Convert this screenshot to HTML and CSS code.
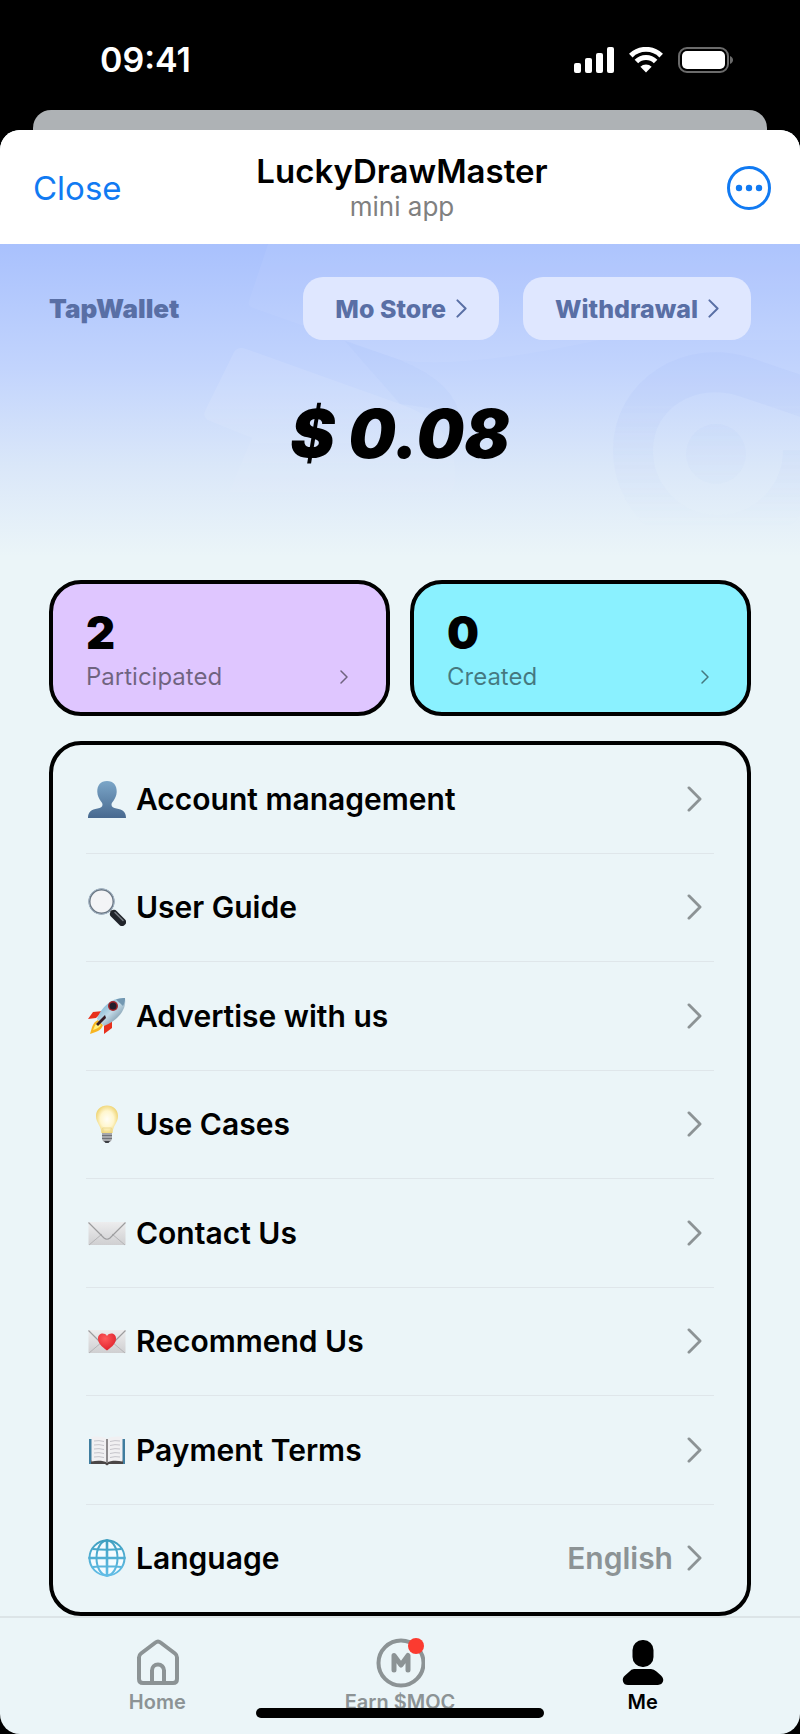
FILE: index.html
```
<!doctype html>
<html lang="en">
<head>
<meta charset="utf-8">
<meta name="viewport" content="width=device-width, initial-scale=1">
<link rel="stylesheet" href="styles.css">
<title>LuckyDrawMaster</title>
</head>
<body>

<svg class="defs" width="0" height="0" aria-hidden="true">
  <defs>
    <linearGradient id="bust" x1="0" y1="0" x2="0" y2="1">
      <stop offset="0" stop-color="#7ba6c8"/><stop offset="1" stop-color="#48698f"/>
    </linearGradient>
    <linearGradient id="paper" x1="0" y1="0" x2="0" y2="1">
      <stop offset="0" stop-color="#ededee"/><stop offset="1" stop-color="#cfcfd1"/>
    </linearGradient>
    <linearGradient id="hull" x1="0" y1="0" x2="1" y2="1">
      <stop offset="0" stop-color="#4f9fc8"/><stop offset=".5" stop-color="#c3dbe8"/><stop offset="1" stop-color="#4b6a80"/>
    </linearGradient>
    <linearGradient id="globe" x1="0" y1="0" x2="0" y2="1">
      <stop offset="0" stop-color="#3f9fc0"/><stop offset="1" stop-color="#62bde6"/>
    </linearGradient>
    <radialGradient id="glow" cx=".5" cy=".5" r=".55">
      <stop offset="0" stop-color="#fffef6"/><stop offset=".55" stop-color="#fff6cd"/><stop offset="1" stop-color="#edd16b"/>
    </radialGradient>
    <radialGradient id="heart" cx=".4" cy=".3" r=".7">
      <stop offset="0" stop-color="#ff5a5a"/><stop offset="1" stop-color="#e0242e"/>
    </radialGradient>
    <symbol id="chevron" viewBox="0 0 16 28">
      <path d="M2 2l12 12L2 26" fill="none" stroke="currentColor" stroke-linecap="round" stroke-linejoin="round"/>
    </symbol>
  </defs>
</svg>

<header class="status">
  <span class="time">09:41</span>
  <div class="signals">
    <svg width="40" height="26" viewBox="0 0 40 26" fill="#fff">
      <rect x="0" y="16" width="7" height="10" rx="2"/>
      <rect x="11" y="11" width="7" height="15" rx="2"/>
      <rect x="22" y="6" width="7" height="20" rx="2"/>
      <rect x="33" y="0" width="7" height="26" rx="2"/>
    </svg>
    <svg width="34" height="26" viewBox="0 0 34 26">
      <g fill="none" stroke="#fff" stroke-width="5">
        <path d="M1.8 8.6a21.6 21.6 0 0 1 30.4 0"/>
        <path d="M7.4 14.4a13.6 13.6 0 0 1 19.2 0"/>
      </g>
      <path d="M17 25.500l-5.600-5.700a8 8 0 0 1 11.200 0z" fill="#fff"/>
    </svg>
    <svg width="56" height="26" viewBox="0 0 56 26">
      <rect x="1" y="1" width="49" height="24" rx="8" fill="none" stroke="#6b6b6b" stroke-width="2"/>
      <rect x="4" y="4" width="43" height="18" rx="5" fill="#fff"/>
      <path d="M52 9c4 1.500 4 6.500 0 8z" fill="#6b6b6b"/>
    </svg>
  </div>
</header>

<div class="peek"></div>

<main class="sheet">
  <div class="titlebar">
    <a class="close" href="#">Close</a>
    <div class="titles">
      <h1>LuckyDrawMaster</h1>
      <p>mini app</p>
    </div>
    <button class="more" type="button" aria-label="More">
      <svg width="44" height="44" viewBox="0 0 44 44" fill="#117af2">
        <circle cx="22" cy="22" r="20.500" fill="none" stroke="#117af2" stroke-width="3"/>
        <circle cx="12" cy="22" r="3.200"/><circle cx="22" cy="22" r="3.200"/><circle cx="32" cy="22" r="3.200"/>
      </svg>
    </button>
  </div>

  <section class="wallet">
    <svg class="pattern" viewBox="0 0 800 316" preserveAspectRatio="xMidYMin slice" aria-hidden="true">
      <path d="M268 0L249 57q-2 5 4 7L400 116q60 10 200-20H800V0z" fill="#fff" opacity=".05"/>
      <path d="M234 108q4-6 12-3L400 160q60 20 55 80L420 316H200l52-122-42-17q-9-4-4-12z" fill="#fff" opacity=".1"/>
      <path d="M345 97L400 116q58 24 60 60q-8-10-60-16z" fill="#7f9df0" opacity=".05"/>
      <g fill="none" stroke="#7f9df0" opacity=".07">
        <path d="M810 155L745 133C690 115 633 150 633 206a85 85 0 0 0 170 0" stroke-width="40"/>
      </g>
      <circle cx="716" cy="210" r="30" fill="#7f9df0" opacity=".05"/>
    </svg>
    <div class="actions">
      <h2>TapWallet</h2>
      <a class="pill" href="#">Mo Store <svg class="chev-s"><use href="#chevron"/></svg></a>
      <a class="pill" href="#">Withdrawal <svg class="chev-s"><use href="#chevron"/></svg></a>
    </div>
    <p class="balance">$ 0.08</p>
  </section>

  <section class="stats">
    <a class="stat joined" href="#">
      <strong>2</strong>
      <span>Participated <svg class="chev-xs"><use href="#chevron"/></svg></span>
    </a>
    <a class="stat created" href="#">
      <strong>0</strong>
      <span>Created <svg class="chev-xs"><use href="#chevron"/></svg></span>
    </a>
  </section>

  <nav class="menu">
    <a href="#">
      <svg class="emoji" viewBox="0 0 38 38"><path d="M19 1c6.500 0 10 4.500 9.700 11-.2 4-1.700 6-2.700 8-1.500 2.300-2.500 3-2.500 4.800 0 2.500 2 3.200 5 3.700 6 1 9.500 3 9.500 9.500H0c0-6.500 3.500-8.500 9.500-9.500 3-.5 5-1.200 5-3.700 0-1.800-1-2.500-2.500-4.800-1-2-2.500-4-2.700-8C9 5.500 12.500 1 19 1z" fill="url(#bust)"/></svg>
      <span>Account management</span>
      <svg class="chev"><use href="#chevron"/></svg>
    </a>
    <a href="#">
      <svg class="emoji" viewBox="0 0 38 38">
        <path d="M22 22l4 4" stroke="#777" stroke-width="3"/>
        <path d="M26 26l8 8" stroke="#20242a" stroke-width="8" stroke-linecap="round"/>
        <path d="M27 24.500l8 8" stroke="#777d84" stroke-width="1.500" stroke-linecap="round"/>
        <circle cx="13.500" cy="13.500" r="12" fill="#f3f4f6" stroke="#6b7783" stroke-width="2"/>
        <circle cx="13.500" cy="13.500" r="12.800" fill="none" stroke="#a3b4c5" stroke-width="1"/>
      </svg>
      <span>User Guide</span>
      <svg class="chev"><use href="#chevron"/></svg>
    </a>
    <a href="#">
      <svg class="emoji" viewBox="0 0 38 38">
        <path d="M15 14L5 15 0 22l8-1zM24 23l0 8-8 6 0-9z" fill="#e8301c"/>
        <path d="M10 23C4 26 4 31 2 37c6-2 11-3 13-9z" fill="#f7b521"/>
        <path d="M10 25c-3 2-4 6-5 8 3-1 6-2 8-5z" fill="#fff07a"/>
        <path d="M9 22C13 10 24 0 37 1c2 12-8 23-21 28z" fill="url(#hull)"/>
        <path d="M37 1c-3-.3-6 .2-9 1.500l7 6.500c1.500-2.700 2.200-5.400 2-8z" fill="#7398b2"/>
        <path d="M8 27l9-9 1 3-8 8z" fill="#351a22"/>
        <circle cx="25" cy="9" r="5" fill="#a3262c"/><circle cx="25" cy="9" r="3.500" fill="#241e2c"/>
      </svg>
      <span>Advertise with us</span>
      <svg class="chev"><use href="#chevron"/></svg>
    </a>
    <a href="#">
      <svg class="emoji" viewBox="0 0 38 38">
        <path d="M14 27h10v6c0 3-2 4.500-5 4.500S14 36 14 33z" fill="#a6a7ab"/>
        <path d="M14 30.500h10M14 33.500h10" stroke="#717379"/>
        <path d="M16 36h6l-1.500 2h-3z" fill="#3b3d42"/>
        <path d="M19 .5c6.500 0 11 4.500 11 10.500 0 7-5 9-5.500 17h-11C13 20 8 18 8 11 8 5 12.500.5 19 .5z" fill="url(#glow)"/>
        <path d="M15.500 27l-1-4h9l-1 4" fill="none" stroke="#ecd98f"/>
      </svg>
      <span>Use Cases</span>
      <svg class="chev"><use href="#chevron"/></svg>
    </a>
    <a href="#">
      <svg class="emoji" viewBox="0 0 38 38">
        <path d="M.5 8h37v23H.5z" fill="url(#paper)"/>
        <path d="M1 31l13-11M37 31L24 20" stroke="#b4b4b6" fill="none"/>
        <path d="M.5 8.500L16 24q3 2.500 6 0L37.500 8.500" stroke="#9c9c9e" stroke-width="1.200" fill="none"/>
      </svg>
      <span>Contact Us</span>
      <svg class="chev"><use href="#chevron"/></svg>
    </a>
    <a href="#">
      <svg class="emoji" viewBox="0 0 38 38">
        <path d="M.5 8h37v23H.5z" fill="url(#paper)"/>
        <path d="M1 31l13-11M37 31L24 20" stroke="#b4b4b6" fill="none"/>
        <path d="M.5 8.500L16 24q3 2.500 6 0L37.500 8.500" stroke="#9c9c9e" stroke-width="1.200" fill="none"/>
        <path d="M19 28.500C13.500 24.500 10 21 10 16.500c0-5.500 6.500-6.500 9-2.500 2.500-4 9-3 9 2.500 0 4.500-3.500 8-9 12z" fill="url(#heart)"/>
      </svg>
      <span>Recommend Us</span>
      <svg class="chev"><use href="#chevron"/></svg>
    </a>
    <a href="#">
      <svg class="emoji" viewBox="0 0 38 38">
        <path d="M1 8h36v25H1z" fill="#3f7d9f"/>
        <path d="M3 29h32v4H21l-2 1.500L17 33H3z" fill="#4a4646"/>
        <path d="M3.500 6C9 5 16 5.500 19 8c3-2.500 10-3 15.500-2v24.500C29 29 22 29.500 19 31.500c-3-2-10-2.500-15.500-1z" fill="#f1f0f2"/>
        <path d="M19 8v23.500" stroke="#8d8a8c" stroke-width="2"/>
        <path d="M6 10q5-1 10 .5M6 14q5-1 10 .5M6 18q5-1 10 .5M6 22q5-1 10 .5M6 26q5-1 10 .5M22 10.500q5-1.500 10-.5M22 14.500q5-1.500 10-.5M22 18.500q5-1.500 10-.5M22 22.500q5-1.500 10-.5M22 26.500q5-1.500 10-.5" stroke="#c5c4ca" fill="none"/>
      </svg>
      <span>Payment Terms</span>
      <svg class="chev"><use href="#chevron"/></svg>
    </a>
    <a href="#">
      <svg class="emoji" viewBox="0 0 38 38">
        <circle cx="19" cy="19" r="17.700" fill="#f4fbff"/>
        <g fill="none" stroke="url(#globe)" stroke-width="2">
          <circle cx="19" cy="19" r="17.500"/>
          <ellipse cx="19" cy="19" rx="10.500" ry="17.500"/>
          <path d="M18.700 1.300h.6v35.400h-.6zM4.500 10q14.500 1.500 29 0M4.500 28q14.500-1.500 29 0M1.300 18.700h35.400v.6H1.300z"/>
        </g>
      </svg>
      <span>Language</span>
      <em>English</em>
      <svg class="chev"><use href="#chevron"/></svg>
    </a>
  </nav>

  <footer class="tabs">
    <a href="#">
      <svg width="48" height="50" viewBox="0 0 48 50" fill="none" stroke="currentColor" stroke-width="4" stroke-linejoin="round">
        <path d="M6 19.500q0-2.500 2-4L22.500 4.500q2.500-2 5 0L42 15.500q2 1.500 2 4V41q0 4-4 4H10q-4 0-4-4z"/>
        <path d="M19 45V32.500a6 6 0 0 1 12 0V45"/>
      </svg>
      Home
    </a>
    <a href="#">
      <svg width="50" height="50" viewBox="0 0 50 50" fill="none" stroke="currentColor">
        <circle cx="26" cy="25" r="22.500" stroke-width="4"/>
        <path d="M19 32V17.500L26 27l7-9.500V32" stroke-width="5" stroke-linecap="round" stroke-linejoin="round"/>
        <circle cx="41" cy="8" r="8" fill="#fb3b30" stroke="none"/>
      </svg>
      Earn $MOC
    </a>
    <a class="current" href="#">
      <svg width="48" height="50" viewBox="0 0 48 50" fill="currentColor">
        <rect x="13.500" y="2" width="21" height="27" rx="10"/>
        <path d="M15 31h17q3 0 5.500 2.500l4.500 4q3 3 2 6T39 47H9q-4 0-5-3.500t2-6l4.500-4Q12 31 15 31z"/>
      </svg>
      Me
    </a>
    <div class="indicator"></div>
  </footer>
</main>

</body>
</html>
```
FILE: styles.css
```
* {
  box-sizing: border-box;
}

body {
  margin: 0;
  min-height: 100vh;
  display: flex;
  flex-direction: column;
  background: #000;
  color: #000;
  font-family: Inter, "Liberation Sans", sans-serif;
}

a {
  color: inherit;
  text-decoration: none;
}

h1, h2, p {
  margin: 0;
}

svg {
  display: block;
  flex: none;
}

.defs {
  position: absolute;
}

.status {
  display: flex;
  justify-content: space-between;
  align-items: center;
  height: 110px;
  padding: 9px 66px 0 100px;
  color: #fff;
}

.time {
  font-size: 34px;
  font-weight: 600;
}

.signals {
  display: flex;
  gap: 15px;
}

.peek {
  height: 20px;
  margin: 0 33px;
  border-radius: 18px 18px 0 0;
  background: #aeb2b5;
}

.sheet {
  flex: 1;
  display: flex;
  flex-direction: column;
  background: #ebf5f8;
  border-radius: 20px;
  overflow: hidden;
}

.titlebar {
  display: grid;
  grid-template-columns: 1fr auto 1fr;
  align-items: center;
  height: 114px;
  padding: 2px 29px 0 33px;
  background: #fff;
}

.close {
  color: #117af2;
  font-size: 33px;
}

.titles {
  text-align: center;
}

.titles h1 {
  font-size: 33px;
  line-height: 38px;
  font-weight: 600;
}

.titles p {
  color: #808080;
  font-size: 26px;
  line-height: 34px;
}

.more {
  justify-self: end;
  padding: 0;
  border: 0;
  background: none;
}

.wallet {
  position: relative;
  height: 336px;
  padding: 33px 49px 0;
  background: linear-gradient(#a9c1fd, #c2d4fd 37%, #dae7f9 66%, #ebf5f8 93%);
}

.pattern {
  position: absolute;
  inset: 0;
  width: 100%;
  height: 316px;
  -webkit-mask-image: linear-gradient(#000 50%, transparent 90%);
  mask-image: linear-gradient(#000 50%, transparent 90%);
}

.actions {
  position: relative;
  display: flex;
  align-items: center;
  gap: 24px;
  color: #596fa5;
}

.actions h2 {
  margin-right: auto;
  font-size: 26px;
  line-height: 30px;
  font-weight: 900;
}

.pill {
  display: flex;
  align-items: center;
  gap: 10px;
  height: 63px;
  padding: 0 32px;
  border-radius: 20px;
  background: #dfe7ff;
  font-size: 25px;
  font-weight: 800;
}

.chev-s {
  width: 11px;
  height: 19px;
  stroke-width: 3px;
}

.balance {
  position: relative;
  margin-top: 52px;
  text-align: center;
  font-size: 67px;
  line-height: 84px;
  font-weight: 900;
  font-style: italic;
}

.stats {
  display: grid;
  grid-template-columns: 1fr 1fr;
  gap: 20px;
  margin: 0 49px 25px;
}

.stat {
  height: 136px;
  padding: 24px 38px 0 33px;
  border: 4px solid #000;
  border-radius: 32px;
}

.joined {
  background: #dfc6ff;
}

.created {
  background: #8af1ff;
}

.stat strong {
  display: block;
  font-size: 45px;
  line-height: 50px;
  font-weight: 900;
}

.stat span {
  display: flex;
  justify-content: space-between;
  align-items: center;
  color: rgba(0, 0, 0, .5);
  font-size: 24px;
  line-height: 38px;
}

.chev-xs {
  width: 8px;
  height: 14px;
  stroke-width: 3px;
}

.menu {
  flex: 1;
  display: flex;
  flex-direction: column;
  margin: 0 49px;
  padding: 0 33px;
  border: 4px solid #000;
  border-radius: 32px;
}

.menu a {
  flex: 1;
  display: flex;
  align-items: center;
  min-height: 100px;
  padding: 0 12px 0 2px;
  font-size: 30px;
  font-weight: 600;
}

.menu a + a {
  border-top: 1px solid #dfe6ea;
}

.emoji {
  width: 38px;
  height: 38px;
  margin-right: 10px;
}

.menu span {
  flex: 1;
}

.menu em {
  margin-right: 14px;
  color: #8c9395;
  font-style: normal;
}

.chev {
  width: 15px;
  height: 26px;
  color: #8c9395;
  stroke-width: 3px;
}

.tabs {
  position: relative;
  display: grid;
  grid-template-columns: 1fr 1fr 1fr;
  height: 118px;
  padding: 20px 36px 0;
  border-top: 2px solid #dce4e7;
}

.tabs a {
  display: flex;
  flex-direction: column;
  align-items: center;
  color: #8c9395;
  font-size: 20px;
  line-height: 28px;
  font-weight: 600;
}

.tabs .current {
  color: #000;
}

/* home bar, drawn over the tab labels */
.indicator {
  position: absolute;
  left: 50%;
  bottom: 16px;
  width: 36%;
  height: 10px;
  border-radius: 5px;
  background: #000;
  transform: translateX(-50%);
}
```
